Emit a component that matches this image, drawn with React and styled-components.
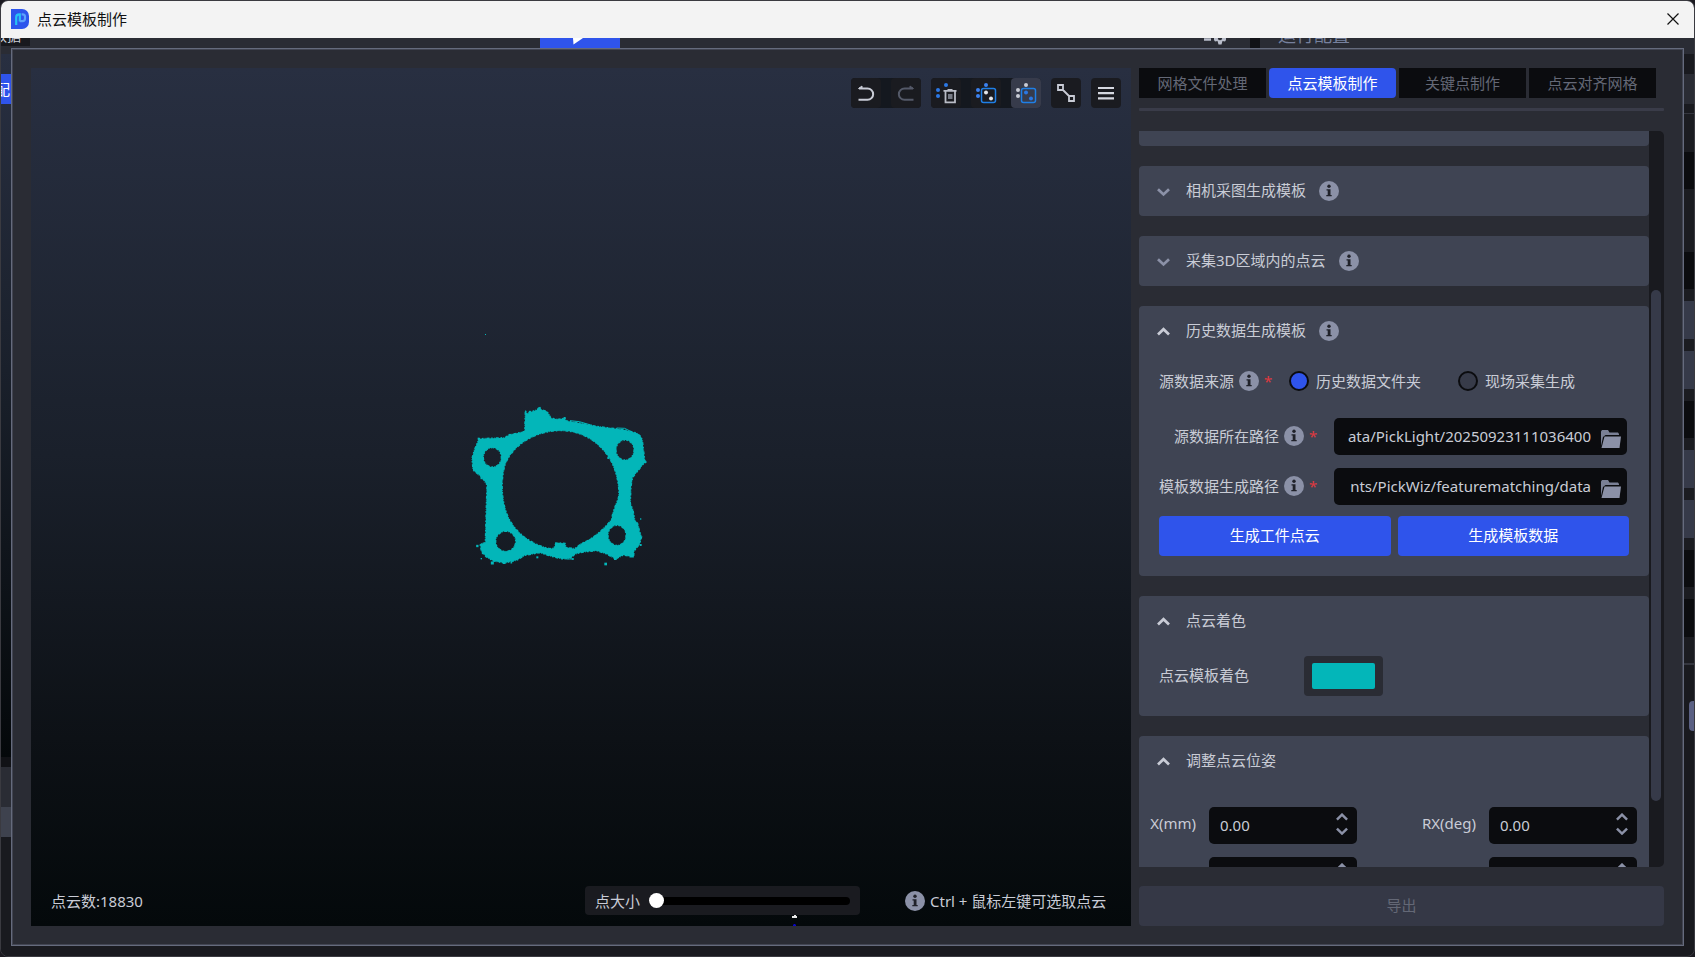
import React, { useLayoutEffect, useRef, useState } from "react";
import styled, { createGlobalStyle } from "styled-components";

const GlobalStyle = createGlobalStyle`
  * {
    box-sizing: border-box;
  }
  body {
    margin: 0;
    background: #1b1a20;
    color: #c9ccd6;
    font-family: "Noto Sans", "Noto Sans CJK SC", sans-serif;
    font-size: 15px;
    line-height: 20px;
  }
  button, input {
    font: inherit;
    color: inherit;
    border: none;
    padding: 0;
    margin: 0;
  }
  button {
    cursor: pointer;
  }
  svg {
    display: block;
    flex: none;
  }
`;

const Window = styled.div`
  height: 100vh;
  display: flex;
  flex-direction: column;
  border: 1px solid #3a3a40;
  border-radius: 8px;
  overflow: hidden;
  background: #191a1f;
`;
const TitleBar = styled.header`
  height: 37px;
  flex: none;
  display: flex;
  align-items: center;
  gap: 8px;
  padding: 0 15px 2px 10px;
  background: #f3f3f3;
  color: #111;
`;
const WindowTitle = styled.h1`
  flex: 1;
  margin: 0;
  font-size: 15px;
  font-weight: 400;
`;
const CloseButton = styled.button`
  background: none;
`;
const Body = styled.div`
  flex: 1;
  min-height: 0;
  display: grid;
  grid-template: minmax(0, 1fr) / minmax(0, 1fr);
  > * {
    grid-area: 1 / 1;
  }
`;

/* main window behind the dialog */
const Backdrop = styled.div`
  display: grid;
  grid-template-columns: 1fr 10px 434px;
  overflow: hidden;
`;
const BackColumn = styled.div`
  display: flex;
  flex-direction: column;
  min-width: 0;
`;
const BackDivider = styled.div`
  background: #111216;
`;
const BackHeader = styled.div`
  height: ${props => props.height}px;
  flex: none;
  display: flex;
  align-items: flex-start;
  overflow: hidden;
  background: #2a2c34;
`;
const BackText = styled.span`
  display: flex;
  align-items: ${props => (props.$center ? "center" : "flex-end")};
  justify-content: flex-end;
  width: ${props => props.width}px;
  height: ${props => props.height}px;
  padding-right: ${props => props.inset || 0}px;
  background: ${props => props.fill || "none"};
  color: ${props => props.color || "#c9ccd6"};
  font-size: ${props => props.size || 15}px;
  line-height: 20px;
  white-space: nowrap;
  overflow: hidden;
`;
const Spacer = styled.div`
  flex: ${props => props.grow};
`;
const RunButton = styled.div`
  width: 80px;
  height: 10px;
  display: flex;
  justify-content: center;
  padding-right: 4px;
  background: #2f54eb;
`;
const GearSlot = styled.div`
  padding-right: 23px;
`;
const BackScene = styled.div`
  flex: 1;
  padding-top: 20px;
  background: linear-gradient(#282f41, #1a202b 45%, #04080a);
`;
const Strip = styled.div`
  flex: none;
  height: ${props => props.size}px;
  background: ${props => props.fill};
`;
const ScrollHandle = styled.div`
  align-self: flex-end;
  width: 5px;
  height: 30px;
  margin-top: 36px;
  border-radius: 4px 0 0 4px;
  background: #5a6083;
`;

const Dialog = styled.main`
  position: relative;
  margin: 10px 10px 10px;
  padding: 19px;
  display: grid;
  grid-template-columns: minmax(0, 1fr) 525px;
  gap: 8px;
  background: #2a2c34;
  border: 1px solid #656b7d;
  box-shadow: inset 0 0 0 1px #424552;
`;

const Viewer = styled.section`
  position: relative;
  display: flex;
  flex-direction: column;
  justify-content: space-between;
  background: linear-gradient(#282f41, #1a202b 45%, #0d1116 78%, #04090b);
`;
const Scene = styled.svg`
  position: absolute;
  inset: 0;
  width: 100%;
  height: 100%;
`;
const Toolbar = styled.div`
  position: relative;
  display: flex;
  justify-content: flex-end;
  gap: 10px;
  padding: 10px;
`;
const ToolGroup = styled.div`
  display: flex;
  gap: 10px;
  border-radius: 4px;
  background: #14181f;
`;
const ToolButton = styled.button`
  width: 30px;
  height: 30px;
  border-radius: 4px;
  background: ${props => (props.$active ? "#373b4b" : "#1a1b20")};
`;
const StatusBar = styled.div`
  position: relative;
  display: flex;
  align-items: center;
  padding: 10px 20px 11px;
`;
const PointCount = styled.div`
  flex: 1;
`;
const SizeControl = styled.label`
  display: flex;
  align-items: center;
  gap: 9px;
  height: 29px;
  padding: 0 10px;
  border-radius: 4px;
  background: #1a1b20;
`;
const SizeSlider = styled.input`
  appearance: none;
  width: 201px;
  height: 15px;
  background: none;
  &::-webkit-slider-runnable-track {
    height: 8px;
    border-radius: 4px;
    background: #000;
  }
  &::-webkit-slider-thumb {
    appearance: none;
    width: 15px;
    height: 15px;
    margin-top: -4px;
    border-radius: 50%;
    background: #fff;
  }
`;
const Hint = styled.div`
  display: flex;
  align-items: center;
  gap: 5px;
  width: 206px;
  margin-left: 45px;
`;

const Side = styled.aside`
  display: flex;
  flex-direction: column;
  min-height: 0;
`;
const Tabs = styled.div`
  display: flex;
  gap: 3px;
  padding-right: 8px;
`;
const Tab = styled.button`
  flex: 1;
  height: 30px;
  border-radius: ${props => (props.$active ? 4 : 0)}px;
  background: ${props => (props.$active ? "#2f54eb" : "#0b0c0f")};
  color: ${props => (props.$active ? "#fff" : "#646876")};
`;
const Rule = styled.div`
  height: 3px;
  flex: none;
  margin: 10px 0 20px;
  border-radius: 1px;
  background: #3a3c49;
`;
const ScrollFrame = styled.div`
  flex: 1;
  min-height: 0;
  display: flex;
`;
const ScrollArea = styled.div`
  flex: 1;
  overflow-y: auto;
  scrollbar-width: none;
  display: flex;
  flex-direction: column;
  gap: 20px;
  > * {
    flex: none;
  }
`;
const ScrollTrack = styled.div`
  width: 15px;
  padding: 0 3px 0 2px;
  border-radius: 0 5px 5px 0;
  background: #191a1f;
`;
const ScrollThumb = styled.div`
  border-radius: 5px;
  background: #363a49;
`;
const ExportButton = styled.button`
  height: 40px;
  flex: none;
  margin-top: 19px;
  padding-bottom: 2px;
  border-radius: 4px;
  background: #353846;
  color: #646876;
`;

const Card = styled.section`
  border-radius: 4px;
  background: #3f4453;
`;
const EmptyCard = styled(Card)`
  height: 244px;
`;
const CardHeader = styled.div`
  display: flex;
  align-items: center;
  gap: 13px;
  height: 50px;
  padding-left: 18px;
`;
const CardToggle = styled.button`
  display: flex;
  align-items: center;
  gap: 16px;
  background: none;
`;
const CardTitle = styled.span`
  padding-bottom: 2px;
`;
const CardBody = styled.div`
  padding: 0 20px 20px;
`;
const SourceRow = styled.div`
  display: flex;
  align-items: center;
  height: 50px;
  margin-bottom: 5px;
`;
const PathRow = styled.div`
  display: flex;
  align-items: center;
  gap: 19px;
  height: 50px;
  padding-right: 2px;
`;
const FieldLabel = styled.label`
  display: flex;
  align-items: center;
  justify-content: flex-end;
  gap: 5px;
  width: ${props => (props.$wide ? "156px" : "auto")};
`;
const Required = styled.span`
  width: 6px;
  color: #e0393f;
`;
const RadioLabel = styled.label`
  display: flex;
  align-items: center;
  gap: 7px;
  margin-left: ${props => (props.$first ? 19 : 37)}px;
`;
const Radio = styled.input`
  appearance: none;
  width: 20px;
  height: 20px;
  border: 2px solid #0b0c0f;
  border-radius: 50%;
  background: #373b49;
  &:checked {
    background: #2f54eb;
  }
`;
const PathField = styled.div`
  flex: 1;
  min-width: 0;
  display: flex;
  align-items: center;
  gap: 10px;
  height: 37px;
  padding: 0 6px 0 8px;
  border-radius: 5px;
  background: #0b0c0f;
`;
const PathInput = styled.input`
  flex: 1;
  min-width: 0;
  height: 100%;
  background: none;
  text-align: right;
  outline: none;
`;
const FolderButton = styled.button`
  padding-top: 5px;
  background: none;
`;
const ButtonRow = styled.div`
  display: flex;
  gap: 7px;
  margin-top: 5px;
`;
const PrimaryButton = styled.button`
  flex: 1;
  height: 40px;
  padding-bottom: 2px;
  border-radius: 4px;
  background: #2f54eb;
  color: #fff;
`;
const ColorRow = styled.label`
  display: flex;
  align-items: center;
  height: 40px;
  margin-top: 10px;
`;
const ColorName = styled.span`
  width: 145px;
  padding-bottom: 2px;
`;
const ColorInput = styled.input`
  appearance: none;
  width: 79px;
  height: 40px;
  padding: 7px 8px;
  border-radius: 4px;
  background: #2a2c34;
  &::-webkit-color-swatch-wrapper {
    padding: 0;
  }
  &::-webkit-color-swatch {
    border: none;
    border-radius: 2px;
  }
`;
const PoseGrid = styled.div`
  display: flex;
  flex-wrap: wrap;
  justify-content: space-between;
  padding: 14px 12px 12px 9px;
`;
const PoseItem = styled.div`
  display: flex;
  align-items: center;
  gap: 13px;
  height: 50px;
`;
const PoseLabel = styled.label`
  width: ${props => (props.$rotate ? 58 : 48)}px;
  padding-bottom: 4px;
  text-align: right;
`;
const SpinBox = styled.div`
  display: flex;
  align-items: center;
  width: 148px;
  height: 37px;
  padding: 0 9px 0 11px;
  border-radius: 5px;
  background: #0b0c0f;
`;
const SpinInput = styled.input`
  flex: 1;
  min-width: 0;
  background: none;
  appearance: textfield;
  outline: none;
  &::-webkit-inner-spin-button {
    appearance: none;
  }
`;
const SpinArrows = styled.div`
  display: flex;
  flex-direction: column;
  gap: 6px;
  padding-bottom: 2px;
`;
const SpinButton = styled.button`
  background: none;
`;

const Logo = () => (
  <svg width="18" height="20" viewBox="0 0 18 20">
    <path d="M0 0h11a7 7 0 0 1 7 7v6a7 7 0 0 1-7 7H0z" fill="#2d55ec" />
    <path d="M5.200 16V8.400a3 3 0 0 1 3-3h.6v7" fill="none" stroke="#27c3f5" strokeWidth="2.200" />
    <path d="M10.600 5.300h1a2.400 2.400 0 0 1 2.400 2.400v1.800a2.600 2.600 0 0 1-2.600 2.600H8.800" fill="none" stroke="#5ea2fb" strokeWidth="2.200" />
  </svg>
);

const InfoIcon = () => (
  <svg width="20" height="20" viewBox="0 0 20 20">
    <circle cx="10" cy="10" r="10" fill="#8b91a7" />
    <circle cx="10" cy="5.300" r="1.700" fill="#20222a" />
    <path d="M7.500 8.200h4v5.800h1.200v1.300H7.300V14h1.400V9.500H7.500z" fill="#20222a" />
  </svg>
);

const Chevron = ({ up, size = 13, color = "#8b91a7" }) => (
  <svg width={size} height={size === 13 ? 13 : 8} viewBox={size === 13 ? "0 0 13 13" : "0 2.500 13 8.500"}>
    <path
      d={up ? "M1 9.500L6.500 4.200 12 9.500" : "M1 4.200l5.500 5.300L12 4.200"}
      fill="none"
      stroke={color}
      strokeWidth="2.700"
    />
  </svg>
);

const FolderIcon = () => (
  <svg width="20" height="18" viewBox="0 0 20 18">
    <path d="M0 16V1.500L1 0h6l1.500 2.500H17L18 4v1H4.500L2 7z" fill="#7a8095" />
    <path d="M3.500 6.500H20L18.500 18H.5z" fill="#8b91a7" />
  </svg>
);

const UndoIcon = ({ flip }) => (
  <svg width="30" height="30" viewBox="0 0 30 30">
    <g
      transform={flip ? "matrix(-1 0 0 1 30 0)" : undefined}
      fill="none"
      stroke={flip ? "#545968" : "#c9ccd6"}
      strokeWidth="2"
    >
      <path d="M8 10.500h8.500a5.600 5.600 0 0 1 0 11.300H7.500" />
      <path d="M7.500 10.500L11 8v2.500z" fill={flip ? "#545968" : "#c9ccd6"} strokeWidth="1" />
    </g>
  </svg>
);

const OuterDots = ({ color }) => (
  <g fill={color}>
    <circle cx="15" cy="7" r="2" />
    <circle cx="7" cy="12" r="2" />
    <circle cx="7" cy="18" r="2" />
  </g>
);

const DeletePointsIcon = () => (
  <svg width="30" height="30" viewBox="0 0 30 30">
    <OuterDots color="#2b78e4" />
    <path d="M12.500 12.800h13M16.500 11.800h5M14.500 13v11.300h9.500V13" fill="none" stroke="#b9bcc6" strokeWidth="1.800" />
    <path d="M17 16h4.500v5H17z" fill="#777b86" />
  </svg>
);

const SelectPointsIcon = ({ inner }) => (
  <svg width="30" height="30" viewBox="0 0 30 30">
    <OuterDots color={inner ? "#c9ccd6" : "#3c82f0"} />
    <rect x="10.500" y="10.500" width="14" height="14" rx="2" fill="none" stroke="#1f7fe6" strokeWidth="1.500" />
    <g fill={inner ? "#2b78e4" : "#e3e5ea"}>
      <circle cx="15" cy="14.500" r="2" />
      <circle cx="20" cy="20.500" r="2" />
    </g>
  </svg>
);

const LinkIcon = () => (
  <svg width="30" height="30" viewBox="0 0 30 30" fill="none" stroke="#c9ccd6" strokeWidth="1.800">
    <path d="M7 7h5v5H7zM18 18h5v5h-5zM12 12l6 6" />
  </svg>
);

const MenuIcon = () => (
  <svg width="30" height="30" viewBox="0 0 30 30" stroke="#d5d8e0" strokeWidth="2.200">
    <path d="M7 10h16M7 15.200h16M7 20.400h16" />
  </svg>
);

const outline =
  "M226 62L232 71L244 65L262 59L268 50L274 59L290 64L298 74L302 84L322 88L345 85L348 92L400 101L440 109L505 117L525 120L560 129L572 139L577 150L584 208L588 216L578 224L566 240L548 262L543 290L541 340L549 360L555 394L564 402L569 425L575 440L569 462L552 484L551 499L535 498L520 495L497 507L470 492L440 482L400 486L375 492L362 505L337 507L300 498L270 488L225 496L200 511L163 519L130 513L108 500L94 482L90 462L106 458L108 380L111 285L97 263L69 240L66 205L73 180L87 146L165 143L178 134L200 130L224 124Z" +
  "M332 122C385 122 440 145 478 204C498 238 506 276 507 312C506 332 488 358 485 388C455 425 425 448 395 460L374 476L348 472L345 460L318 458L312 474L300 476C236 462 188 420 170 370C152 318 154 265 165 225C188 162 262 121 332 122z" +
  "M127 173a27 29 0 1 0 .1 0zM525 150a27 30 0 1 0 .1 0zM167 424a30 30 0 1 0 .1 0zM501 406a27 30 0 1 0 .1 0z";

const specks = [
  [126, 352, 2], [572, 387, 4], [467, 522, 8], [262, 502, 6], [127, 519, 9], [163, 518, 8], [82, 468, 7],
  [95, 264, 7], [560, 400, 7], [344, 84, 6], [545, 496, 13], [496, 506, 8], [368, 507, 5], [184, 518, 5],
  [100, 488, 9], [572, 465, 6], [180, 136, 8], [86, 146, 6], [94, 506, 4], [475, 204, 6], [240, 66, 7],
];

const PointCloud = () => (
  <Scene viewBox="0 0 1100 858" aria-label="点云">
    <g transform="translate(419 322) scale(.33333)" fill="#03b6b9">
      <path d={outline} fillRule="evenodd" stroke="#03b6b9" strokeWidth="4" strokeDasharray="5 4 2 3 9 5" />
      <path d="M360 92l28 3 38 11M500 114l24 1 18 9M350 507h22" fill="none" stroke="#03b6b9" strokeWidth="3" />
      {specks.map(([x, y, s]) => (
        <rect key={`${x}-${y}`} x={x - s / 2} y={y - s / 2} width={s} height={s} />
      ))}
    </g>
    <rect x="454" y="266" width="1" height="1" fill="#03b6b9" />
    <path d="M761 850v-2h2v-1h2v1h1v2z" fill="#e8e8e8" />
    <path d="M762 858v-1l1-1h1l1 1v1z" fill="#0a06c8" />
  </Scene>
);

const rightStrips = [
  [20, "#191a1f"], [30, "#2a2c34"], [9, "#191a1f"], [1, "#34363f"], [38, "#1b1c21"],
  [37, "#0b0c0f"], [63, "#1b1c21"], [37, "#0b0c0f"], [12, "#1b1c21"],
  [38, "#363a49"], [12, "#1b1c21"], [38, "#363a49"], [12, "#1b1c21"],
  [37, "#0b0c0f"], [12, "#1b1c21"], [38, "#363a49"], [12, "#1b1c21"],
  [38, "#363a49"], [12, "#1b1c21"], [37, "#0b0c0f"], [12, "#1b1c21"],
  [38, "#0b0c0f"], [26, "#1b1c21"], [2, "#34363f"],
];

const MainWindow = () => (
  <Backdrop aria-hidden="true">
    <BackColumn>
      <BackHeader height={16}>
        <BackText width={29} height={8} inset={9} fill="#18191e" size={14}>数据</BackText>
        <Spacer grow={7} />
        <RunButton>
          <svg width="12" height="7" viewBox="0 0 12 7">
            <path d="M1 0h10L1.500 6.500z" fill="#fff" />
          </svg>
        </RunButton>
        <Spacer grow={8} />
        <GearSlot>
          <svg width="24" height="7" viewBox="0 0 24 7">
            <path d="M1 1.500h7" stroke="#b9bdca" strokeWidth="2.500" />
            <path d="M11 0h12v2l-1 1.500-2.500-.5-1 3.500h-3l-1-3.500-2.500.5L11 2z" fill="#b9bdca" />
            <circle cx="17" cy="0" r="2.200" fill="#2a2c34" />
          </svg>
        </GearSlot>
      </BackHeader>
      <BackScene>
        <BackText width={10} height={30} inset={1} fill="#2f54eb" color="#fff" $center>配</BackText>
      </BackScene>
      <Strip size={10} fill="#111216" />
      <Strip size={40} fill="#2a2c34" />
      <Strip size={30} fill="#3e424e" />
      <Strip size={119} fill="#191a1f" />
    </BackColumn>
    <BackDivider />
    <BackColumn>
      <BackHeader height={16}>
        <BackText width={90} height={7} color="#77819e" size={18}>运行配置</BackText>
      </BackHeader>
      {rightStrips.map(([size, fill], i) => (
        <Strip key={i} size={size} fill={fill} />
      ))}
      <ScrollHandle />
    </BackColumn>
  </Backdrop>
);

const Section = ({ title, info, open, children }) => (
  <Card>
    <CardHeader>
      <CardToggle type="button" aria-expanded={Boolean(open)}>
        <Chevron up={open} color={open ? "#c9ccd6" : "#8b91a7"} />
        <CardTitle>{title}</CardTitle>
      </CardToggle>
      {info && <InfoIcon />}
    </CardHeader>
    {open && children}
  </Card>
);

const PathSetting = ({ id, label, value }) => (
  <PathRow>
    <FieldLabel htmlFor={id} $wide>
      {label}
      <InfoIcon />
      <Required>*</Required>
    </FieldLabel>
    <PathField>
      <PathInput id={id} type="text" defaultValue={value} />
      <FolderButton type="button" aria-label="选择文件夹">
        <FolderIcon />
      </FolderButton>
    </PathField>
  </PathRow>
);

const Pose = ({ name, unit, rotate }) => (
  <PoseItem>
    <PoseLabel htmlFor={name} $rotate={rotate}>{`${name}(${unit})`}</PoseLabel>
    <SpinBox>
      <SpinInput id={name} type="number" step="0.01" defaultValue="0.00" />
      <SpinArrows>
        <SpinButton type="button" aria-label="增加">
          <Chevron up size={12} />
        </SpinButton>
        <SpinButton type="button" aria-label="减少">
          <Chevron size={12} />
        </SpinButton>
      </SpinArrows>
    </SpinBox>
  </PoseItem>
);

const tabs = ["网格文件处理", "点云模板制作", "关键点制作", "点云对齐网格"];

export default function App() {
  const [tab, setTab] = useState(tabs[1]);
  const [thumb, setThumb] = useState({ top: 0, height: 0 });
  const area = useRef(null);

  const updateThumb = () => {
    const { scrollTop, scrollHeight, clientHeight } = area.current;
    setThumb({
      top: (scrollTop / scrollHeight) * clientHeight,
      height: (clientHeight / scrollHeight) * clientHeight
    });
  };

  useLayoutEffect(() => {
    area.current.scrollTop = 229;
    updateThumb();
  }, []);

  return (
    <>
      <GlobalStyle />
      <Window>
        <TitleBar>
          <Logo />
          <WindowTitle>点云模板制作</WindowTitle>
          <CloseButton type="button" aria-label="关闭">
            <svg width="12" height="12" viewBox="0 0 12 12" stroke="#111" strokeWidth="1.200">
              <path d="M.5.5l11 11M11.500.5l-11 11" />
            </svg>
          </CloseButton>
        </TitleBar>
        <Body>
          <MainWindow />
          <Dialog>
            <Viewer>
              <PointCloud />
              <Toolbar>
                <ToolGroup>
                  <ToolButton type="button" aria-label="撤销"><UndoIcon /></ToolButton>
                  <ToolButton type="button" aria-label="重做"><UndoIcon flip /></ToolButton>
                </ToolGroup>
                <ToolGroup>
                  <ToolButton type="button" aria-label="删除点"><DeletePointsIcon /></ToolButton>
                  <ToolButton type="button" aria-label="保留点"><SelectPointsIcon /></ToolButton>
                  <ToolButton type="button" aria-label="反选点" $active><SelectPointsIcon inner /></ToolButton>
                </ToolGroup>
                <ToolButton type="button" aria-label="连线"><LinkIcon /></ToolButton>
                <ToolButton type="button" aria-label="菜单"><MenuIcon /></ToolButton>
              </Toolbar>
              <StatusBar>
                <PointCount>点云数:18830</PointCount>
                <SizeControl>
                  点大小
                  <SizeSlider type="range" min="1" max="10" defaultValue="1" />
                </SizeControl>
                <Hint>
                  <InfoIcon />
                  Ctrl + 鼠标左键可选取点云
                </Hint>
              </StatusBar>
            </Viewer>

            <Side>
              <Tabs role="tablist">
                {tabs.map(name => (
                  <Tab
                    key={name}
                    type="button"
                    role="tab"
                    aria-selected={name === tab}
                    $active={name === tab}
                    onClick={() => setTab(name)}
                  >
                    {name}
                  </Tab>
                ))}
              </Tabs>
              <Rule />
              <ScrollFrame>
                <ScrollArea ref={area} onScroll={updateThumb}>
                  <EmptyCard />
                  <Section title="相机采图生成模板" info />
                  <Section title="采集3D区域内的点云" info />
                  <Section title="历史数据生成模板" info open>
                    <CardBody>
                      <SourceRow>
                        <FieldLabel as="span">
                          源数据来源
                          <InfoIcon />
                          <Required>*</Required>
                        </FieldLabel>
                        <RadioLabel $first>
                          <Radio type="radio" name="source" defaultChecked />
                          历史数据文件夹
                        </RadioLabel>
                        <RadioLabel>
                          <Radio type="radio" name="source" />
                          现场采集生成
                        </RadioLabel>
                      </SourceRow>
                      <PathSetting
                        id="source-path"
                        label="源数据所在路径"
                        value="ata/PickLight/20250923111036400"
                      />
                      <PathSetting
                        id="template-path"
                        label="模板数据生成路径"
                        value="nts/PickWiz/featurematching/data"
                      />
                      <ButtonRow>
                        <PrimaryButton type="button">生成工件点云</PrimaryButton>
                        <PrimaryButton type="button">生成模板数据</PrimaryButton>
                      </ButtonRow>
                    </CardBody>
                  </Section>
                  <Section title="点云着色" open>
                    <CardBody>
                      <ColorRow>
                        <ColorName>点云模板着色</ColorName>
                        <ColorInput type="color" defaultValue="#03b6b9" />
                      </ColorRow>
                    </CardBody>
                  </Section>
                  <Section title="调整点云位姿" open>
                    <PoseGrid>
                      <Pose name="X" unit="mm" />
                      <Pose name="RX" unit="deg" rotate />
                      <Pose name="Y" unit="mm" />
                      <Pose name="RY" unit="deg" rotate />
                      <Pose name="Z" unit="mm" />
                      <Pose name="RZ" unit="deg" rotate />
                    </PoseGrid>
                  </Section>
                </ScrollArea>
                <ScrollTrack>
                  <ScrollThumb style={{ height: thumb.height, transform: `translateY(${thumb.top}px)` }} />
                </ScrollTrack>
              </ScrollFrame>
              <ExportButton type="button">导出</ExportButton>
            </Side>
          </Dialog>
        </Body>
      </Window>
    </>
  );
}
